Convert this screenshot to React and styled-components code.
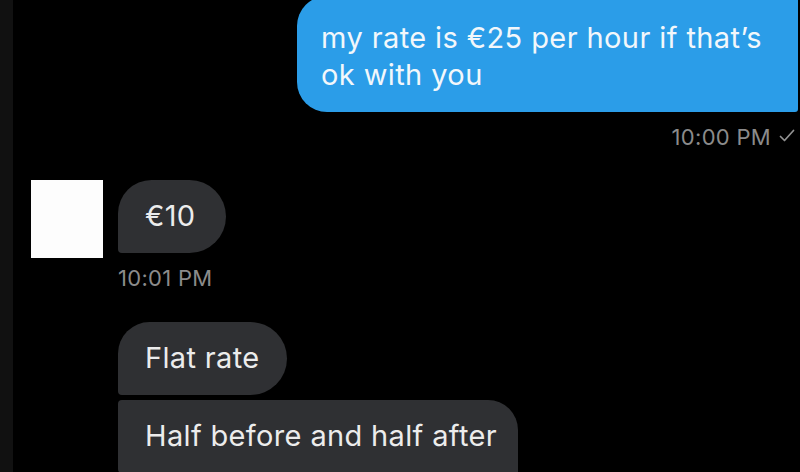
import React from 'react';
import styled, {createGlobalStyle} from 'styled-components';

const GlobalStyle = createGlobalStyle`
  html, body {
    margin: 0;
    padding: 0;
    background: #000;
  }
  body {
    font-family: Inter, "Liberation Sans", Arial, sans-serif;
  }
`

const messages = {
    outgoing: ['my rate is €25 per hour if that’s', 'ok with you'],
    incoming: ['Flat rate', 'Half before and half after'],
}

const App = () => {
    return (
        <Screen>
            <GlobalStyle/>
            <SideStrip/>
            <Thread>
                <OutgoingGroup>
                    <OutBubble>
                        {messages.outgoing[0]}<br/>{messages.outgoing[1]}
                    </OutBubble>
                    <Stamp align="right">
                        10:00 PM
                        <Check width="16" height="14" viewBox="0 0 16 14">
                            <path d="M1.5 7.5 L5.5 11.5 L14.5 1.5" fill="none" stroke="#929292" strokeWidth="1.7"
                                  strokeLinecap="round" strokeLinejoin="round"/>
                        </Check>
                    </Stamp>
                </OutgoingGroup>

                <IncomingGroup>
                    <Avatar/>
                    <IncomingColumn>
                        <InBubble radius="34px 37px 37px 4px" pr="31px">€10</InBubble>
                        <Stamp>10:01 PM</Stamp>
                        <InBubble radius="32px 37px 37px 4px" mt="31px">{messages.incoming[0]}</InBubble>
                        <InBubble radius="4px 30px 0 4px" mt="5px" pr="21px">{messages.incoming[1]}</InBubble>
                    </IncomingColumn>
                </IncomingGroup>
            </Thread>
        </Screen>
    );
};

export default App;

const Screen = styled.div`
  display: flex;
  width: 800px;
  height: 472px;
  overflow: hidden;
  background: #000;
`

const SideStrip = styled.div`
  flex: 0 0 13px;
  background: #111111;
`

const Thread = styled.div`
  flex: 1;
  display: flex;
  flex-direction: column;
`

const OutgoingGroup = styled.div`
  display: flex;
  flex-direction: column;
  align-items: flex-end;
  padding-right: 2px;
`

const OutBubble = styled.div`
  margin-top: -4px;
  width: 501px;
  box-sizing: border-box;
  padding: 23px 10px 19px 24px;
  background: #2b9de8;
  color: #f2f7fb;
  font-size: 29px;
  line-height: 37px;
  letter-spacing: 0.4px;
  white-space: nowrap;
  border-radius: 30px 2px 3px 30px;
`

const Stamp = styled.div`
  display: flex;
  align-items: center;
  gap: 8px;
  margin-top: 12px;
  padding-right: ${p => p.align === 'right' ? '3px' : '0'};
  color: #8b8b8b;
  font-size: 22px;
  line-height: 26px;
  letter-spacing: 0.3px;
`

const Check = styled.svg`
  display: block;
  margin-top: -2px;
`

const IncomingGroup = styled.div`
  display: flex;
  align-items: flex-start;
  margin-top: 30px;
  padding-left: 18px;
`

const Avatar = styled.div`
  flex: 0 0 72px;
  height: 78px;
  margin-right: 15px;
  background: #fdfdfd;
`

const IncomingColumn = styled.div`
  display: flex;
  flex-direction: column;
  align-items: flex-start;
`

const InBubble = styled.div`
  margin-top: ${p => p.mt || '0'};
  padding: 20px ${p => p.pr || '27px'} 21px 27px;
  background: #2f3033;
  color: #ececec;
  font-size: 29px;
  line-height: 32px;
  letter-spacing: 0.35px;
  border-radius: ${p => p.radius};
  white-space: nowrap;
`
